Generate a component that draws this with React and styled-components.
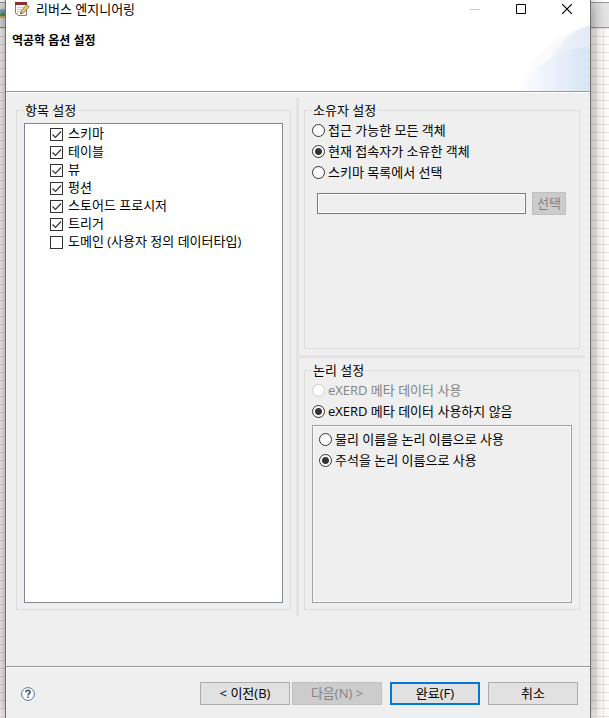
import React, { useState } from "react";
import styled, { createGlobalStyle } from "styled-components";

const itemNames = [
  "스키마",
  "테이블",
  "뷰",
  "펑션",
  "스토어드 프로시저",
  "트리거",
  "도메인 (사용자 정의 데이터타입)",
];

const ownerOptions = [
  "접근 가능한 모든 객체",
  "현재 접속자가 소유한 객체",
  "스키마 목록에서 선택",
];

const App = () => {
  const [checked, setChecked] = useState(itemNames.map((_, i) => i < 6));
  const [owner, setOwner] = useState(1);
  const [naming, setNaming] = useState(1);

  const toggle = (index) =>
    setChecked(checked.map((value, i) => (i === index ? !value : value)));

  return (
    <Page>
      <GlobalStyle />
      <Edge $width={5}>
        <Toolbar>
          <svg width="5" height="9" viewBox="0 0 5 9">
            <rect width="5" height="9" fill="#7fa9cf" />
            <path d="M0 5l3-2 2 2v2H0z" fill="#5e9a4c" />
            <path d="M0 0h5v1H0zM0 7h5v2H0z" fill="#d8b766" />
          </svg>
        </Toolbar>
        <Canvas />
      </Edge>

      <Dialog>
        <TitleBar>
          <AppIcon />
          <WindowTitle>리버스 엔지니어링</WindowTitle>
          <WindowButton aria-label="Minimize" disabled>
            <svg width="10" height="10" viewBox="0 0 10 10">
              <path d="M0 5.5h10" stroke="#c8c8c8" />
            </svg>
          </WindowButton>
          <WindowButton aria-label="Maximize">
            <svg width="10" height="10" viewBox="0 0 10 10">
              <path d="M.5.5h9v9h-9z" fill="none" stroke="#000" />
            </svg>
          </WindowButton>
          <WindowButton aria-label="Close">
            <svg width="10" height="10" viewBox="0 0 10 10">
              <path d="M0 0l10 10M10 0L0 10" stroke="#000" strokeWidth="1.2" />
            </svg>
          </WindowButton>
        </TitleBar>

        <Header>
          <h1>역공학 옵션 설정</h1>
          <HeaderArt />
        </Header>

        <Body>
          <Pane>
            <Group>
              <legend>항목 설정</legend>
              <ItemList>
                {itemNames.map((name, i) => (
                  <ItemRow key={name}>
                    <Checkbox checked={checked[i]} onChange={() => toggle(i)} />
                    {name}
                  </ItemRow>
                ))}
              </ItemList>
            </Group>
          </Pane>
          <Sash />
          <RightColumn>
            <Pane>
              <Group>
                <legend>소유자 설정</legend>
                {ownerOptions.map((name, i) => (
                  <Option key={name}>
                    <Radio
                      name="owner"
                      checked={owner === i}
                      onChange={() => setOwner(i)}
                    />
                    {name}
                  </Option>
                ))}
                <SchemaRow>
                  <SchemaInput aria-label="스키마" disabled />
                  <Button $small disabled>
                    선택
                  </Button>
                </SchemaRow>
              </Group>
            </Pane>
            <Sash />
            <Pane>
              <Group>
                <legend>논리 설정</legend>
                <Option $disabled>
                  <Radio name="meta" disabled />
                  eXERD 메타 데이터 사용
                </Option>
                <Option>
                  <Radio name="meta" defaultChecked />
                  eXERD 메타 데이터 사용하지 않음
                </Option>
                <NamingBox>
                  <Option>
                    <Radio
                      name="naming"
                      checked={naming === 0}
                      onChange={() => setNaming(0)}
                    />
                    물리 이름을 논리 이름으로 사용
                  </Option>
                  <Option>
                    <Radio
                      name="naming"
                      checked={naming === 1}
                      onChange={() => setNaming(1)}
                    />
                    주석을 논리 이름으로 사용
                  </Option>
                </NamingBox>
              </Group>
            </Pane>
          </RightColumn>
        </Body>

        <Footer>
          <HelpButton aria-label="Help">
            <svg width="14" height="14" viewBox="0 0 14 14" fill="none">
              <circle cx="7" cy="7" r="6.4" fill="#fff" stroke="#5b7393" />
              <path
                d="M4.9 5.3c0-1.3.9-2 2.1-2s2.1.7 2.1 1.8c0 1.4-2 1.5-2 3.3"
                stroke="#41618a"
                strokeWidth="1.7"
              />
              <path d="M6.2 9.4h1.7v1.6H6.2z" fill="#41618a" />
            </svg>
          </HelpButton>
          <NavButtons>
            <Button>&lt; 이전(B)</Button>
            <Button disabled>다음(N) &gt;</Button>
          </NavButtons>
          <Button $primary>완료(F)</Button>
          <Button>취소</Button>
        </Footer>
      </Dialog>

      <Edge $width={18}>
        <Toolbar />
        <Canvas $vertical />
      </Edge>
    </Page>
  );
};

const AppIcon = () => (
  <svg width="16" height="16" viewBox="0 0 16 16">
    <path d="M1.5 1.5h11v13H4L1.5 12z" fill="#fdfbf8" stroke="#8d7b7b" />
    <path d="M1 1h12v3H1z" fill="#8c2f32" />
    <path d="M3 6.5h7M3 8.5h5M3 10.5h4" stroke="#d3cccc" />
    <path d="M1.5 12H4v2.5z" fill="#b9aaaa" />
    <path
      d="M6.5 12.8l1-3.4 5.5-5.9 2.2 2.2-5.5 6z"
      fill="#e9c67e"
      stroke="#86662f"
      strokeWidth=".8"
    />
    <path d="M6.3 13l.5-1.7L8 12.5z" fill="#333" />
  </svg>
);

const HeaderArt = () => (
  <svg width="78" height="66" viewBox="0 0 78 66">
    <defs>
      <linearGradient id="outer" x1="0" x2="1">
        <stop offset="0" stopColor="#fff" />
        <stop offset="1" stopColor="#f3f5fa" />
      </linearGradient>
      <linearGradient id="middle" x1="0" x2="1">
        <stop offset="0" stopColor="#f3f6fd" />
        <stop offset="1" stopColor="#e3ebf7" />
      </linearGradient>
      <linearGradient id="inner" x1="0" x2="1">
        <stop offset="0" stopColor="#fff" />
        <stop offset=".35" stopColor="#f2f5fd" />
        <stop offset="1" stopColor="#d6e4f4" />
      </linearGradient>
    </defs>
    <path d="M2 66C18 32 44 8 78 0v66z" fill="url(#outer)" />
    <path d="M26 66C34 34 52 8 78 0v66z" fill="url(#middle)" />
    <path d="M4 66C22 40 48 24 78 22v44z" fill="url(#inner)" />
  </svg>
);

export default App;

const GlobalStyle = createGlobalStyle`
  * {
    box-sizing: border-box;
  }

  body {
    margin: 0;
    background: #fff;
  }

  body, button, input {
    font-family: "Open Sans", "Noto Sans CJK KR", sans-serif;
    font-size: 13px;
    line-height: 18px;
    color: #000;
  }
`;

const Page = styled.div`
  display: flex;
  min-height: 100vh;
`;

const Edge = styled.div`
  flex: none;
  width: ${(props) => props.$width}px;
  display: flex;
  flex-direction: column;
`;

const Toolbar = styled.div`
  height: 28px;
  padding-top: 9px;
  border-bottom: 1px solid #999;
  background: linear-gradient(#fff 2px, #999 2px, #999 3px, #e6e6e6 3px);

  svg {
    display: block;
  }
`;

const Canvas = styled.div`
  flex: 1;
  background-color: #fff;
  background-image: linear-gradient(#f0dede 1px, transparent 1px)
    ${(props) =>
      props.$vertical && ", linear-gradient(90deg, #f0e2e2 1px, transparent 1px)"};
  background-size: 8px 8px;
  background-position: 4px 0;
`;

const Dialog = styled.main`
  position: relative;
  flex: 1;
  min-width: 0;
  display: flex;
  flex-direction: column;
  background: #efefef;
  border: solid #707070;
  border-width: 0 1px;
  box-shadow: 0 0 16px rgba(0, 0, 0, 0.5);
`;

const TitleBar = styled.div`
  display: flex;
  align-items: center;
  height: 18px;
  padding-left: 8px;
  background: #fff;
`;

const WindowTitle = styled.span`
  flex: 1;
  padding-left: 6px;
`;

const WindowButton = styled.button`
  width: 46px;
  height: 18px;
  padding: 0;
  border: 0;
  background: none;
  display: flex;
  align-items: center;
  justify-content: center;
`;

const Header = styled.header`
  display: flex;
  justify-content: space-between;
  align-items: flex-end;
  height: 74px;
  padding-left: 6px;
  background: #fff;
  border-bottom: 1px solid #999;

  h1 {
    align-self: flex-start;
    margin: 14px 0 0;
    font-size: 12px;
    font-weight: 700;
  }

  svg {
    display: block;
  }
`;

const Body = styled.div`
  flex: 1;
  display: grid;
  grid-template-columns: 285fr 3px 286fr;
  padding: 5px 5px 50px;
  border-top: 1px solid #fff;
  border-bottom: 1px solid #999;
`;

const RightColumn = styled.div`
  display: grid;
  grid-template-rows: 257fr 3px 258fr;
`;

const Sash = styled.div`
  background: #e3e3e3;
`;

const Pane = styled.section`
  display: flex;
  min-width: 0;
  padding: 2px 5px 6px;
`;

const Group = styled.fieldset`
  flex: 1;
  min-width: 0;
  display: flex;
  flex-direction: column;
  margin: 0;
  padding: 0 7px 6px;
  border: 1px solid #dcdcdc;

  legend {
    padding: 0 2px 0 1px;
    line-height: 20px;
  }
`;

const ItemList = styled.div`
  flex: 1;
  margin-top: 3px;
  border: 1px solid #828790;
  background: #fff;
`;

const ItemRow = styled.label`
  display: flex;
  align-items: center;
  gap: 5px;
  height: 18px;
  padding-left: 25px;
`;

const Checkbox = styled.input.attrs({ type: "checkbox" })`
  appearance: none;
  flex: none;
  width: 13px;
  height: 13px;
  margin: 2px 0 0;
  border: 1px solid #333;
  background: #fff;

  &:checked {
    background: #fff
      url("data:image/svg+xml,%3Csvg xmlns='http://www.w3.org/2000/svg' viewBox='0 0 11 11'%3E%3Cpath d='M1.5 5.5l3 3 5.5-6' fill='none' stroke='%23333' stroke-width='1.2'/%3E%3C/svg%3E");
  }
`;

const Option = styled.label`
  display: flex;
  align-items: center;
  gap: 3px;
  height: 21px;
  padding-bottom: 1px;
  color: ${(props) => (props.$disabled ? "#838383" : "#000")};
`;

const Radio = styled.input.attrs({ type: "radio" })`
  appearance: none;
  flex: none;
  width: 13px;
  height: 13px;
  margin: 0;
  border: 1px solid #333;
  border-radius: 50%;
  background: #fff;

  &:checked {
    background: radial-gradient(circle, #333 3px, #fff 4px);
  }

  &:disabled {
    border-color: #ccc;
  }
`;

const SchemaRow = styled.div`
  display: flex;
  align-items: center;
  gap: 6px;
  margin-top: 9px;
  padding: 0 6px 0 5px;
`;

const SchemaInput = styled.input`
  flex: 1;
  min-width: 0;
  height: 21px;
  border: 1px solid #7a7a7a;
  background: #efefef;
  box-shadow: inset 0 0 0 1px #fff;
`;

const NamingBox = styled.div`
  flex: 1;
  margin-top: 3px;
  padding: 3px 6px;
  border: 1px solid #a0a0a0;
  box-shadow: inset 0 0 0 1px #fafafa;
`;

const Footer = styled.footer`
  display: flex;
  align-items: center;
  gap: 8px;
  padding: 14px 12px 13px 15px;
  border-top: 1px solid #fff;
`;

const HelpButton = styled.button`
  margin-right: auto;
  padding: 0;
  border: 0;
  background: none;

  svg {
    display: block;
  }
`;

const NavButtons = styled.div`
  display: flex;
  gap: 2px;
`;

const Button = styled.button`
  width: ${(props) => (props.$small ? 34 : 90)}px;
  height: 23px;
  padding: 0 0 2px;
  border: ${(props) => (props.$primary ? "2px solid #0078d7" : "1px solid #adadad")};
  background: #e1e1e1;

  &:disabled {
    border-color: #bfbfbf;
    background: #ccc;
    color: #838383;
  }
`;
